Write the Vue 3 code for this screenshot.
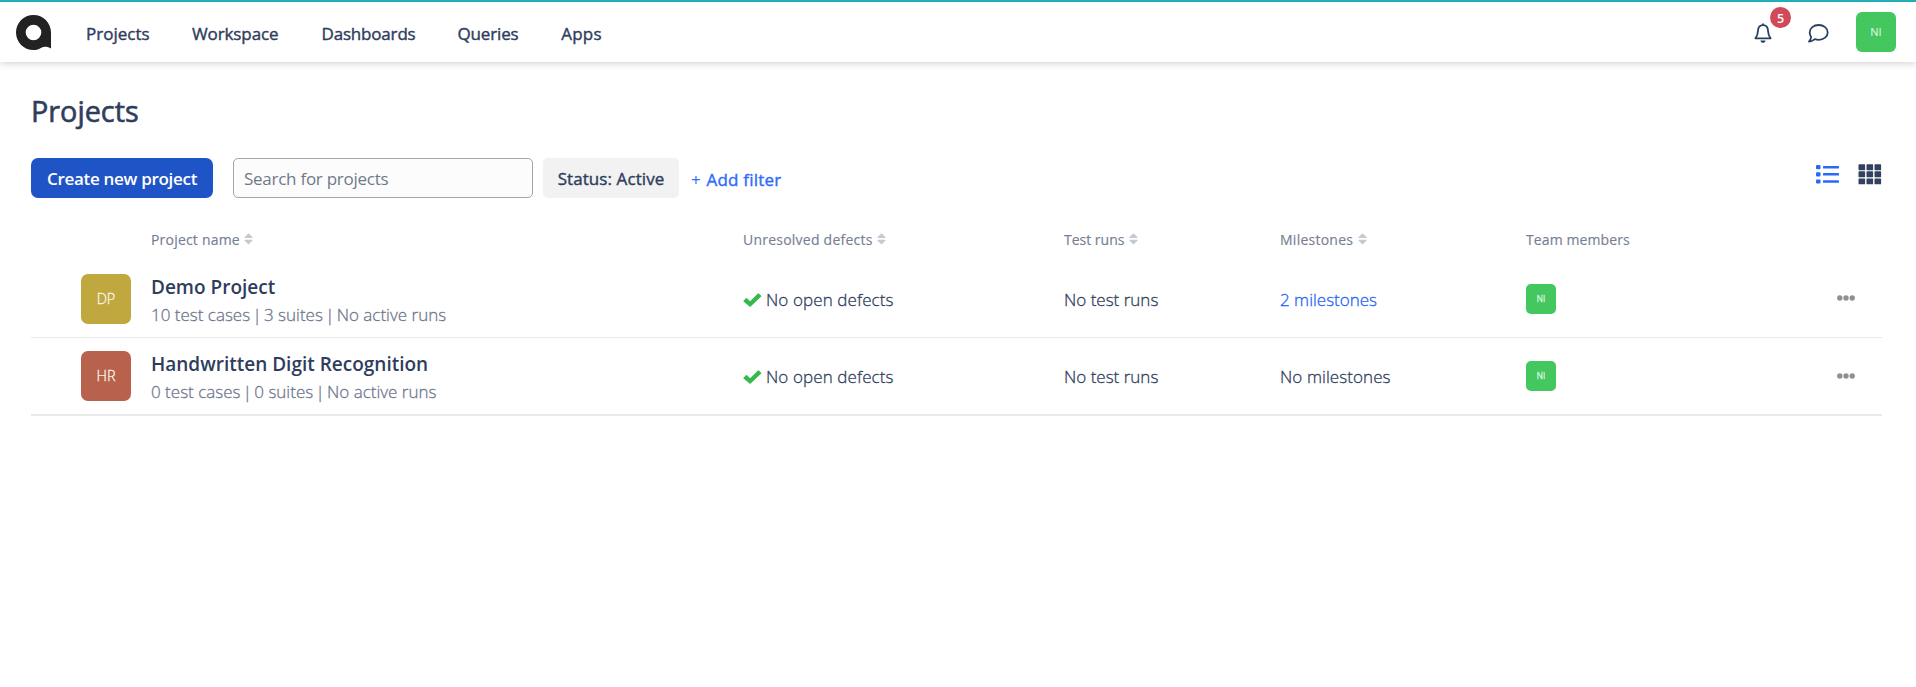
<script setup>
const nav = [
  { label: 'Projects', cls: 'n1' },
  { label: 'Workspace', cls: 'n2' },
  { label: 'Dashboards', cls: 'n3' },
  { label: 'Queries', cls: 'n4' },
  { label: 'Apps', cls: 'n5' },
]
const columns = [
  { label: 'Project name', sort: true, cls: 'h1' },
  { label: 'Unresolved defects', sort: true, cls: 'h2' },
  { label: 'Test runs', sort: true, cls: 'h3' },
  { label: 'Milestones', sort: true, cls: 'h4' },
  { label: 'Team members', sort: false, cls: 'h5' },
]
const projects = [
  { code: 'DP', tone: 'gold', name: 'Demo Project', info: ['10 test cases', '3 suites', 'No active runs'], milestones: '2 milestones', link: true },
  { code: 'HR', tone: 'rust', name: 'Handwritten Digit Recognition', info: ['0 test cases', '0 suites', 'No active runs'], milestones: 'No milestones', link: false },
]
const cells = [0, 8, 16]
</script>

<template>
  <div class="page">
    <header class="topbar">
      <svg class="logo" width="36" height="36" viewBox="0 0 36 36">
        <path fill="#222" fill-rule="evenodd" d="M17.5 0C7.800 0 0 7.800 0 17.500S7.800 35 17.500 35C20.500 35 23 34.200 25.300 32.700C28 31.200 32 31.500 35 33.600V17.500C35 7.800 27.200 0 17.500 0ZM17.500 9.700a7.800 7.800 0 1 1 0 15.600a7.800 7.800 0 0 1 0-15.600Z" />
      </svg>
      <nav>
        <a v-for="n in nav" :key="n.label" :class="n.cls">{{ n.label }}</a>
      </nav>
      <div class="tools">
        <div class="bell">
          <svg width="18" height="20" viewBox="0 0 18 20" fill="none" stroke="#2c3e60" stroke-width="1.8" stroke-linejoin="round">
            <path d="M9 .4V2M1.400 15.300C3 13.500 3.800 12 3.900 8.300C4 4.500 6 2.200 9 2.200s5 2.300 5.100 6.100C14.200 12 15 13.500 16.600 15.300Z" />
            <path d="M6.400 17.500h5.200C11.300 19 10.200 19.800 9 19.800S6.700 19 6.400 17.500Z" fill="#2c3e60" stroke="none" />
          </svg>
          <span class="badge">5</span>
        </div>
        <svg class="chat" width="21" height="19" viewBox="0 0 21 19" fill="none" stroke="#2c3e60" stroke-width="1.800" stroke-linejoin="round">
          <path d="M10.700 1C15.700 1 19.700 4.300 19.700 8.400S15.700 15.800 10.700 15.800C9.300 15.800 8 15.500 6.800 15.100C5.200 16.400 3.200 17.500 1 17.500C2.200 16.100 3 14.600 3.200 13C2.200 11.700 1.700 10.100 1.700 8.400C1.700 4.300 5.700 1 10.700 1Z" />
        </svg>
        <span class="user">NI</span>
      </div>
    </header>

    <main>
      <h1>Projects</h1>
      <div class="toolbar">
        <button class="create"><span>Create new project</span></button>
        <div class="search"><span>Search for projects</span></div>
        <div class="status"><span>Status: Active</span></div>
        <a class="add"><span class="plus">+</span><span>Add filter</span></a>
        <div class="views">
          <svg width="24" height="20" viewBox="0 0 24 20" fill="#2a68fb">
            <rect x="0" y="1" width="4.500" height="4.200" rx="1" />
            <rect x="0" y="8.200" width="4.500" height="4.200" rx="1" />
            <rect x="0" y="15.400" width="4.500" height="4.200" rx="1" />
            <rect x="7" y="2" width="16" height="2.600" rx=".5" />
            <rect x="7" y="9" width="16" height="2.600" rx=".5" />
            <rect x="7" y="16.200" width="16" height="2.600" rx=".5" />
          </svg>
          <svg width="24" height="21" viewBox="0 0 24 21" fill="#32415f">
            <template v-for="(x, i) in cells" :key="i">
              <rect v-for="(y, j) in [0.3, 7.3, 14.4]" :key="j" :x="x + 0.5" :y="y" width="6.600" height="5.900" rx=".6" />
            </template>
          </svg>
        </div>
      </div>

      <div class="grid head">
        <span class="blank"></span>
        <div v-for="c in columns" :key="c.label" class="hcell">
          <span :class="c.cls">{{ c.label }}</span>
          <svg v-if="c.sort" width="9" height="12" viewBox="0 0 9 12" fill="#c6c8d2">
            <path d="M4.500 .3L8.600 4.300Q8.800 5 8 5H1Q.2 5 .4 4.300ZM4.500 11.400L8.600 7.500Q8.800 6.800 8 6.800H1Q.2 6.800 .4 7.500Z" />
          </svg>
        </div>
      </div>
      <div v-for="(p, i) in projects" :key="p.code" class="grid row" :class="'r' + i">
        <div class="icon" :class="p.tone">{{ p.code }}</div>
        <div class="project">
          <div class="name">{{ p.name }}</div>
          <div class="info">
            <template v-for="(part, k) in p.info" :key="k"><span v-if="k" class="bar"> | </span>{{ part }}</template>
          </div>
        </div>
        <div class="defects">
          <svg width="19" height="14" viewBox="0 0 19 14" fill="#37b94c">
            <path d="M.5 7.700L3 5.200Q3.500 4.800 4 5.200L7.100 8.200L14.900 .6Q15.400 .2 15.900 .6L18.200 2.700Q18.600 3.200 18.200 3.600L7.700 13.500Q7.100 14 6.500 13.500L.5 8.500Q.1 8.100 .5 7.700Z" />
          </svg>
          <span>No open defects</span>
        </div>
        <div class="runs">No test runs</div>
        <div class="miles" :class="{ link: p.link }">{{ p.milestones }}</div>
        <div class="member"><span>NI</span></div>
        <svg class="more" width="18" height="6" viewBox="0 0 18 6" fill="#8f9094">
          <circle cx="2.800" cy="3" r="2.700" /><circle cx="9" cy="3" r="2.700" /><circle cx="15.200" cy="3" r="2.700" />
        </svg>
      </div>
    </main>
  </div>
</template>

<style>
body { background: #fff; overflow: hidden; }
</style>

<style scoped>
* { box-sizing: border-box; }
.page { min-height: 687px; font-family: "Open Sans", "Noto Sans", sans-serif; font-size: 17px; color: #2f3d5d; white-space: nowrap; }
.topbar { height: 62px; border-top: 2px solid #20aeb8; background: #fff; box-shadow: 0 1px 8px rgba(0, 0, 0, .2); display: flex; padding: 0 20px 0 16px; }
.logo { margin-top: 13px; flex: none; }
nav { display: flex; margin-left: 34px; gap: 43px; line-height: 23px; padding-top: 20px; -webkit-text-stroke: .4px; }
.n1 { margin-right: -.6px; }
.n2 { letter-spacing: -.1px; }
.n3 { letter-spacing: -.18px; margin-right: -1px; }
.n4 { letter-spacing: -.17px; margin-right: -.2px; }
.n5 { letter-spacing: .2px; }
.tools { margin-left: auto; display: flex; }
.bell { position: relative; width: 18px; margin: 21px 36px 0 0; height: 20px; }
.bell svg { display: block; }
.badge { position: absolute; left: 16px; top: -16.500px; width: 21px; height: 21px; border-radius: 50%; background: #d04a5a; color: #fff; font-size: 12.500px; font-weight: 600; line-height: 23px; text-align: center; }
.chat { margin: 22px 27px 0 0; }
.user { width: 40px; height: 40px; margin-top: 10px; border-radius: 6px; background: #45c75f; color: #e6fae9; font-size: 11px; line-height: 40px; text-align: center; }
main { padding: 0 34px 0 31px; }
h1 { margin: 29px 0 0; font-size: 28.800px; font-weight: 400; line-height: 39px; -webkit-text-stroke: .6px; }
.toolbar { display: flex; height: 40px; margin-top: 28px; }
.create { width: 182px; border: 0; border-radius: 7px; background: #1f54c7; color: #fff; font: 600 17px/41px "Open Sans", sans-serif; letter-spacing: -.3px; padding: 0; white-space: nowrap; }
.search { width: 300px; margin-left: 20px; border: 1px solid #a4a5a8; border-radius: 5px; background: #fcfcfc; padding-left: 10px; color: #70798a; line-height: 39px; letter-spacing: -.26px; }
.status { width: 136px; margin-left: 10px; border-radius: 5px; background: #f2f2f2; text-align: center; line-height: 41px; letter-spacing: .08px; -webkit-text-stroke: .4px; }
.add { margin-left: 12px; color: #2f6bfb; line-height: 43px; display: flex; gap: 5.500px; letter-spacing: .22px; -webkit-text-stroke: .4px; }
.plus { -webkit-text-stroke: 0; }
.views { margin: 6px 0 0 auto; display: flex; gap: 18px; }
.grid { display: grid; grid-template-columns: 120px 592px 321px 216px 246px 310px 1fr; }
.head { margin-top: 28px; height: 35px; font-size: 14px; line-height: 27px; color: #767e93; -webkit-text-stroke: .15px; }
.h1 { letter-spacing: .2px; }
.h2 { letter-spacing: .23px; }
.h4 { letter-spacing: .25px; }
.h5 { letter-spacing: .1px; }
.hcell { display: flex; gap: 4.500px; }
.hcell svg { margin-top: 7px; }
.row { height: 77px; border-bottom: 1px solid #e9e9eb; font-weight: 300; -webkit-text-stroke: .3px; }
.row.r1 { height: 78px; border-bottom-width: 2px; }
.icon { width: 50px; height: 50px; margin: 13px 0 0 50px; border-radius: 7px; color: #faf5e8; font-size: 14.500px; line-height: 50px; text-align: center; }
.gold { background: #c0a73e; }
.rust { background: #b8614c; }
.name { margin-top: 13px; font-size: 19px; font-weight: 600; line-height: 26px; -webkit-text-stroke: 0; }
.info { line-height: 25px; color: #6f778e; margin-top: 2px; }
.bar { white-space: pre; margin: 0 -2.100px; }
.defects { display: flex; gap: 4px; line-height: 23px; padding-top: 27px; letter-spacing: .1px; }
.defects svg { margin-top: 5px; flex: none; }
.runs, .miles { line-height: 23px; padding-top: 27px; }
.miles { letter-spacing: .08px; }
.miles.link { color: #2361fb; letter-spacing: 0; }
.member span { display: block; width: 30px; height: 30px; margin-top: 23px; border-radius: 5px; background: #45c75f; color: #e6fae9; font-size: 8.500px; line-height: 30px; text-align: center; }
.more { margin-top: 34px; margin-left: 1px; }
.r1 .more { margin-top: 35px; }
</style>
